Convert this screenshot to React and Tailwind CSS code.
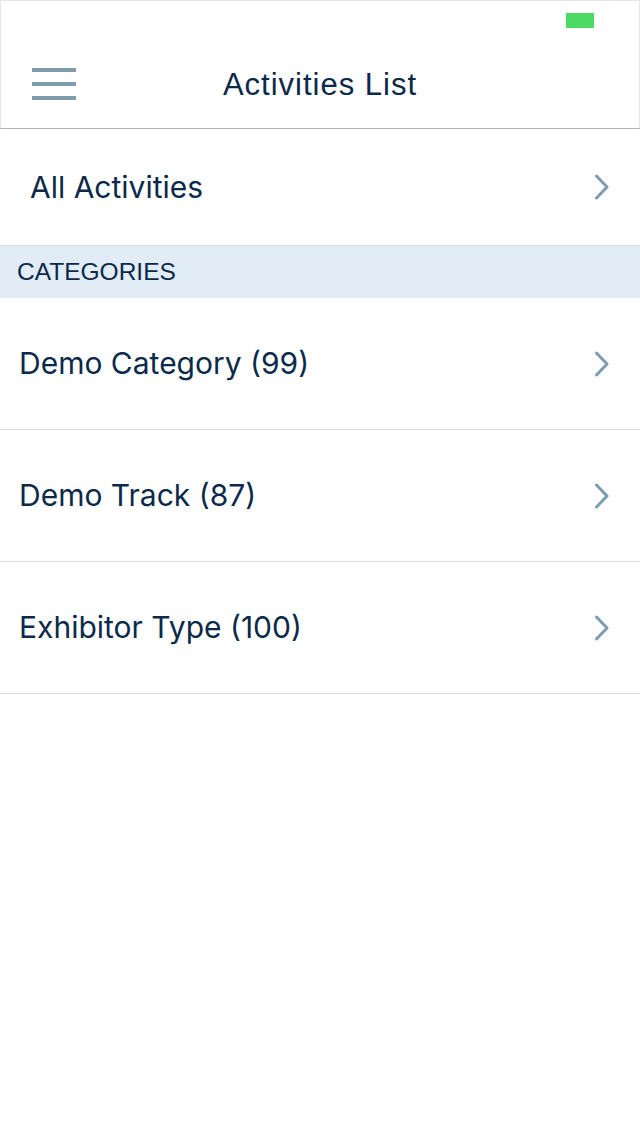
import React from 'react';

const Chevron = () => (
    <svg width="16" height="26" viewBox="0 0 16 26" className="shrink-0">
        <path d="M2.5 2 L13 13 L2.5 24" fill="none" stroke="#7b9cb1" strokeWidth="3" strokeLinecap="round" strokeLinejoin="round" />
    </svg>
);

const Row = ({ label, className }) => (
    <div className={`flex items-center justify-between pr-[30px] border-b border-[#d9d9d9] ${className}`}>
        <span className="text-[30px] text-[#0b2a4a]">{label}</span>
        <Chevron />
    </div>
);

const App = () => {
    const categories = ['Demo Category (99)', 'Demo Track (87)', 'Exhibitor Type (100)'];

    return (
        <div className="w-[640px] h-[1136px] bg-white font-['Inter','Liberation_Sans',sans-serif]">
            {/* Header */}
            <div className="h-[129px] border border-[#e6e6e6] border-b-[#b3b3b3] flex flex-col">
                <div className="h-[41px] flex justify-end pr-[45px] pt-[12px]">
                    <div className="w-[28px] h-[15px] bg-[#4cd964]"></div>
                </div>
                <div className="flex-1 relative flex items-center justify-center">
                    <div className="absolute left-[31px] top-[26px] flex flex-col gap-[10px]">
                        <div className="w-[44px] h-[4px] bg-[#7f9cae]"></div>
                        <div className="w-[44px] h-[4px] bg-[#7f9cae]"></div>
                        <div className="w-[44px] h-[4px] bg-[#7f9cae]"></div>
                    </div>
                    <h1 className="text-[31px] tracking-[1px] text-[#0b2a4a] font-['Liberation_Sans',sans-serif]">Activities List</h1>
                </div>
            </div>

            <Row label="All Activities" className="h-[117px] pl-[30px]" />

            <div className="h-[52px] bg-[#e1ecf7] flex items-center pl-[17px]">
                <span className="text-[24.5px] text-[#0b2a4a] font-['Liberation_Sans',sans-serif]">CATEGORIES</span>
            </div>

            {categories.map((c) => (
                <Row key={c} label={c} className="h-[132px] pl-[19px]" />
            ))}
        </div>
    );
};

export default App;
